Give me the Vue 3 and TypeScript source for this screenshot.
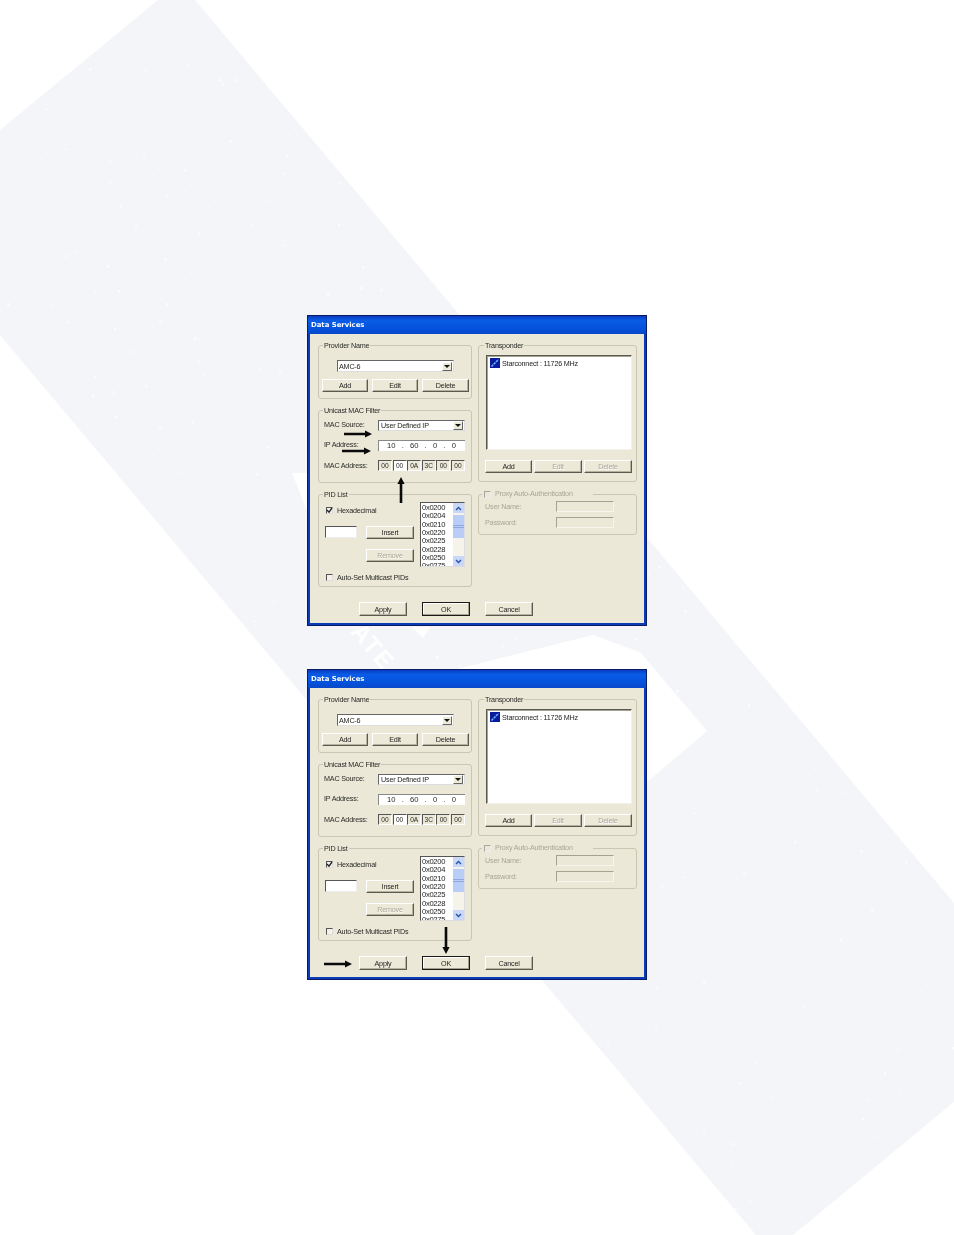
<script setup lang="ts">
interface Arrow { dir: 'right' | 'up' | 'down'; x: number; y: number; len: number }
interface Dialog { arrows: Arrow[] }

const dialogs: Dialog[] = [
  { arrows: [
    { dir: 'right', x: 37, y: 119, len: 28 },
    { dir: 'right', x: 35, y: 136, len: 29 },
    { dir: 'up', x: 94, y: 162, len: 26 },
  ] },
  { arrows: [
    { dir: 'right', x: 17, y: 295, len: 28 },
    { dir: 'down', x: 139, y: 258, len: 27 },
  ] },
]

function arrowPath(a: Arrow): string {
  const L = a.len
  const s = 1.3
  const h = 3.6
  const n = 7
  if (a.dir === 'right') return `M0 ${-s} H${L - n} V${-h} L${L} 0 L${L - n} ${h} V${s} H0 Z`
  if (a.dir === 'up') return `M${-s} ${L} V${n} H${-h} L0 0 L${h} ${n} H${s} V${L} Z`
  return `M${-s} 0 V${L - n} H${-h} L0 ${L} L${h} ${L - n} H${s} V0 Z`
}

const macs = ['00', '00', '0A', '3C', '00', '00']
const pids = ['0x0200', '0x0204', '0x0210', '0x0220', '0x0225', '0x0228', '0x0250', '0x0275']

let seed = 71
function rnd(): number {
  seed = (seed * 1103515 + 12345) % 2147483
  return seed / 2147483
}
const specks = Array.from({ length: 420 }, () => ({
  x: Math.round(rnd() * 954),
  y: Math.round(rnd() * 1235),
  o: 0.25 + rnd() * 0.5,
}))
</script>

<template>
  <div class="page">
    <svg class="watermark" width="954" height="1235" viewBox="0 0 954 1235">
      <defs>
        <clipPath id="band">
          <polygon points="0,130 158,0 195,0 954,903 954,1102 793,1235 756,1235 0,335" />
        </clipPath>
      </defs>
      <polygon points="0,130 158,0 195,0 954,903 954,1102 793,1235 756,1235 0,335" fill="#f4f5f8" />
      <g clip-path="url(#band)">
        <rect v-for="(s, i) in specks" :key="i" :x="s.x" :y="s.y" width="2.5" height="2.5" fill="#fff" :opacity="s.o" />
      </g>
      <polygon points="457,669 593,635 640,652 707,731 620,805 457,800" fill="#fff" />
      <polygon points="292,473 307,473 307,511" fill="#fff" />
      <polygon points="412,627 430,627 423,638" fill="#fff" />
      <text x="350" y="632" transform="rotate(50 350 632)" class="wm-text">ATE</text>
    </svg>

    <div class="stack">
      <section v-for="(d, di) in dialogs" :key="di" class="dialog">
        <header class="titlebar">Data Services</header>
        <div class="client">
          <div class="columns">
            <div class="col col-left">
              <fieldset class="group g-provider">
                <legend>Provider Name</legend>
                <div class="combo c-provider"><span class="combo-text">AMC-6</span><span class="combo-btn"></span></div>
                <div class="btn-row">
                  <button class="btn w46">Add</button>
                  <button class="btn w46">Edit</button>
                  <button class="btn w47">Delete</button>
                </div>
              </fieldset>

              <fieldset class="group g-unicast">
                <legend>Unicast MAC Filter</legend>
                <div class="row">
                  <span class="lbl raised">MAC Source:</span>
                  <div class="combo c-source"><span class="combo-text">User Defined IP</span><span class="combo-btn"></span></div>
                </div>
                <div class="row">
                  <span class="lbl raised">IP Address:</span>
                  <div class="ip">
                    <span>10</span><span>.</span><span>60</span><span>.</span><span>0</span><span>.</span><span>0</span>
                  </div>
                </div>
                <div class="row">
                  <span class="lbl">MAC Address:</span>
                  <div class="macs">
                    <span v-for="(m, i) in macs" :key="i" class="mac" :class="{ active: i === 1 }">{{ m }}</span>
                  </div>
                </div>
              </fieldset>

              <fieldset class="group g-pid">
                <legend>PID List</legend>
                <div class="pid-top">
                  <div class="pid-controls">
                    <label class="check-row hex">
                      <span class="check">
                        <svg width="7" height="7" viewBox="0 0 7 7"><path d="M1 3 L3 5.2 L6 1" fill="none" stroke="#222" stroke-width="1.3" /></svg>
                      </span>
                      Hexadecimal
                    </label>
                    <div class="insert-row">
                      <span class="input pid-input"></span>
                      <button class="btn w48">Insert</button>
                    </div>
                    <button class="btn w48 disabled remove">Remove</button>
                  </div>
                  <div class="listbox">
                    <div class="pid-items">
                      <div v-for="p in pids" :key="p" class="pid">{{ p }}</div>
                    </div>
                    <div class="scroll">
                      <span class="sb-btn">
                        <svg width="7" height="5" viewBox="0 0 7 5"><path d="M1 4 L3.5 1.5 L6 4" fill="none" stroke="#2a50b0" stroke-width="1.4" /></svg>
                      </span>
                      <span class="sb-thumb"></span>
                      <span class="sb-track"></span>
                      <span class="sb-btn">
                        <svg width="7" height="5" viewBox="0 0 7 5"><path d="M1 1 L3.5 3.5 L6 1" fill="none" stroke="#2a50b0" stroke-width="1.4" /></svg>
                      </span>
                    </div>
                  </div>
                </div>
                <label class="check-row auto">
                  <span class="check"></span>
                  Auto-Set Multicast PIDs
                </label>
              </fieldset>
            </div>

            <div class="col col-right">
              <fieldset class="group g-transponder">
                <legend class="tp-legend">Transponder</legend>
                <div class="tp-list">
                  <div class="tp-item">
                    <svg class="tp-icon" width="10" height="10" viewBox="0 0 10 10">
                      <rect width="10" height="10" fill="#0a1a9c" />
                      <path d="M1.5 8.5 L8.5 1.5" stroke="#6fb0ff" stroke-width="1.6" stroke-dasharray="2.4 0.8" />
                    </svg>
                    <span>Starconnect : 11726 MHz</span>
                  </div>
                </div>
                <div class="tp-btns">
                  <button class="btn w47">Add</button>
                  <button class="btn w48 disabled">Edit</button>
                  <button class="btn w48 disabled">Delete</button>
                </div>
              </fieldset>

              <fieldset class="group g-proxy">
                <legend class="proxy-legend">
                  <span class="check off"></span>
                  <span>Proxy Auto-Authentication</span>
                </legend>
                <div class="proxy-row">
                  <span class="proxy-lbl">User Name:</span>
                  <span class="input off-input"></span>
                </div>
                <div class="proxy-row">
                  <span class="proxy-lbl">Password:</span>
                  <span class="input off-input"></span>
                </div>
              </fieldset>
            </div>
          </div>

          <div class="actions">
            <button class="btn w48 tall">Apply</button>
            <button class="btn w48 tall default">OK</button>
            <button class="btn w48 tall">Cancel</button>
          </div>
        </div>

        <svg class="arrows" width="340" height="311" viewBox="0 0 340 311">
          <path
            v-for="(a, i) in d.arrows"
            :key="i"
            :d="arrowPath(a)"
            :transform="`translate(${a.x} ${a.y})`"
            fill="#0a0a0a"
          />
        </svg>
      </section>
    </div>
  </div>
</template>

<style>
html, body { margin: 0; background: #fff; }
</style>

<style scoped>
.page {
  position: relative;
  width: 954px;
  height: 1235px;
  overflow: hidden;
  background: #fff;
  font-family: "Liberation Sans", Arial, sans-serif;
  font-size: 7.2px;
  letter-spacing: -0.2px;
  color: #2a2a26;
}
.watermark { position: absolute; inset: 0; }
.wm-text {
  font-family: "Liberation Sans", Arial, sans-serif;
  font-weight: 700;
  font-size: 24px;
  letter-spacing: 2px;
  fill: #fff;
}
.stack {
  position: relative;
  display: flex;
  flex-direction: column;
  gap: 43px;
  padding: 315px 0 0 307px;
}
.dialog {
  position: relative;
  box-sizing: border-box;
  width: 340px;
  height: 311px;
  border: 1px solid #0a1a66;
  background: #0b3cb8;
  display: flex;
  flex-direction: column;
  filter: blur(0.35px);
}
.titlebar {
  height: 18px;
  padding-left: 3px;
  line-height: 18px;
  flex: none;
  color: #fff;
  font-family: "DejaVu Sans", sans-serif;
  font-size: 6.9px;
  letter-spacing: 0;
  font-weight: 700;
  background: linear-gradient(180deg, #0a3cc0 0%, #0a5ce6 25%, #0452dc 70%, #0a48c8 100%);
}
.client {
  flex: 1;
  margin: 0 2px 2px;
  padding: 6px 7px 0 8px;
  background: #ebe8d8;
}
.columns { display: flex; gap: 6px; }
.col { display: flex; flex-direction: column; }
.col-left { width: 154px; gap: 6px; }
.col-right { width: 159px; gap: 7px; }
.group {
  box-sizing: border-box;
  margin: 0;
  padding: 0;
  min-width: 0;
  border: 1px solid #c9c6b4;
  border-radius: 3px;
}
legend {
  margin-left: 4px;
  padding: 0 1px;
  height: 10px;
  line-height: 12px;
}
.tp-legend { margin-left: 5px; }
.g-provider { height: 59px; }
.g-unicast { height: 78px; }
.g-pid { height: 98px; }
.g-transponder { height: 142px; }
.g-proxy { height: 46px; padding-top: 2px; }

.btn {
  box-sizing: border-box;
  height: 13px;
  padding: 0;
  font: inherit;
  letter-spacing: inherit;
  color: #1f1f1c;
  background: #ece9d8;
  border: 1px solid;
  border-color: #fff #5a5a50 #5a5a50 #fff;
  box-shadow: inset -1px -1px 0 #b5b2a0;
  border-radius: 0;
}
.w46 { width: 46px; }
.w47 { width: 47px; }
.w48 { width: 48px; }
.tall { height: 14px; }
.disabled { color: #a8a696; text-shadow: 0.5px 0.5px 0 #fff; }
.default { border-color: #1a1a18; box-shadow: inset -1px -1px 0 #a5a290, inset 1px 1px 0 #fff; }

.combo {
  box-sizing: border-box;
  display: flex;
  align-items: center;
  justify-content: space-between;
  background: #fff;
  border: 1px solid;
  border-color: #666 #ddd #ddd #666;
  padding: 0 1px 0 2px;
  height: 12px;
}
.c-provider { width: 117px; margin: 10px 0 7px 18px; padding-left: 1px; }
.c-source { width: 87px; height: 11px; }
.combo-text { color: #1f1f1c; }
.combo-btn {
  box-sizing: border-box;
  width: 10px;
  height: 9px;
  background: #ece9d8;
  border: 1px solid;
  border-color: #fff #666 #666 #fff;
  display: flex;
  align-items: center;
  justify-content: center;
}
.combo-btn::after {
  content: "";
  border-left: 3px solid transparent;
  border-right: 3px solid transparent;
  border-top: 3px solid #111;
}
.btn-row { display: flex; gap: 4px; padding-left: 3px; }

.row { display: flex; align-items: center; height: 11px; margin: 9px 0 0 5px; }
.row:nth-of-type(1) { margin-top: 5px; }
.lbl { width: 54px; flex: none; }
.raised { margin-bottom: 3px; }
.ip {
  box-sizing: border-box;
  width: 87px;
  height: 11px;
  padding-left: 8px;
  background: #fff;
  border-top: 1px solid #888;
  border-left: 1px solid #888;
  display: flex;
  gap: 6.2px;
  line-height: 10px;
  font-size: 7.6px;
  letter-spacing: 0;
}
.macs { display: flex; width: 87px; justify-content: space-between; }
.mac {
  box-sizing: border-box;
  width: 14px;
  height: 11px;
  text-align: center;
  line-height: 10px;
  font-size: 6.6px;
  letter-spacing: 0;
  border: 1px solid;
  border-color: #555 #fff #fff #555;
  background: #ebe8d8;
}
.mac.active { background: #fff; }

.pid-top { display: flex; padding: 3px 0 0 6px; }
.pid-controls { width: 95px; flex: none; display: flex; flex-direction: column; align-items: flex-start; }
.check-row { display: flex; align-items: center; gap: 4px; height: 8px; }
.hex { margin: 4px 0 0 1px; }
.auto { margin: 6px 0 0 7px; }
.check {
  box-sizing: border-box;
  width: 7px;
  height: 7px;
  flex: none;
  background: #f4f2e8;
  border: 1px solid;
  border-color: #555 #ddd #ddd #555;
  display: flex;
  align-items: center;
  justify-content: center;
}
.check svg { flex: none; }
.check.off { border-color: #a8a696 #eee #eee #a8a696; background: #ebe8d8; }
.insert-row { display: flex; align-items: flex-start; margin-top: 12px; }
.input {
  box-sizing: border-box;
  display: block;
  background: #fff;
  border: 1px solid;
  border-color: #555 #eee #eee #555;
}
.pid-input { width: 32px; height: 12px; margin-right: 9px; }
.remove { margin: 10px 0 0 41px; }
.listbox {
  box-sizing: border-box;
  width: 45px;
  height: 65px;
  background: #fff;
  border: 1px solid;
  border-color: #555 #ddd #ddd #555;
  display: flex;
  overflow: hidden;
}
.pid-items { flex: 1; padding: 1px 0 0 1px; overflow: hidden; }
.pid { height: 8.35px; line-height: 8.35px; font-size: 7.6px; letter-spacing: -0.3px; color: #1c1c1c; }
.scroll { width: 11px; flex: none; display: flex; flex-direction: column; background: #f6f4ea; }
.sb-btn {
  height: 10px;
  flex: none;
  background: #c8d8f6;
  display: flex;
  align-items: center;
  justify-content: center;
}
.sb-thumb {
  height: 23px;
  flex: none;
  margin-top: 2px;
  background: repeating-linear-gradient(180deg, #b9cdf6 0 10px, #8fa9e0 10px 11px, #b9cdf6 11px 12px, #8fa9e0 12px 13px, #b9cdf6 13px 23px);
}
.sb-track { flex: 1; }

.tp-list {
  box-sizing: border-box;
  width: 146px;
  height: 95px;
  margin: 5px 0 0 7px;
  background: #fff;
  border: 1px solid;
  border-color: #5a5a50 #f4f2e8 #f4f2e8 #5a5a50;
  box-shadow: inset 1px 1px 0 #a5a292;
  padding: 2px 0 0 3px;
}
.tp-item { display: flex; align-items: center; gap: 2px; color: #1c1c1c; }
.tp-icon { flex: none; }
.tp-btns { display: flex; gap: 2px; margin: 10px 0 0 6px; }

.proxy-legend {
  display: flex;
  align-items: center;
  gap: 4px;
  margin-left: 3px;
  padding: 0 20px 0 2px;
  color: #a8a696;
}
.proxy-row { display: flex; align-items: center; height: 11px; margin: 0 0 5px 6px; color: #a8a696; }
.proxy-lbl { width: 71px; flex: none; }
.off-input {
  width: 58px;
  height: 11px;
  background: #ebe8d8;
  border-color: #a5a292 #f6f4ec #f6f4ec #a5a292;
}

.actions { display: flex; gap: 15px; margin-top: 15px; padding-left: 41px; }

.arrows { position: absolute; left: -1px; top: -1px; pointer-events: none; }
</style>
